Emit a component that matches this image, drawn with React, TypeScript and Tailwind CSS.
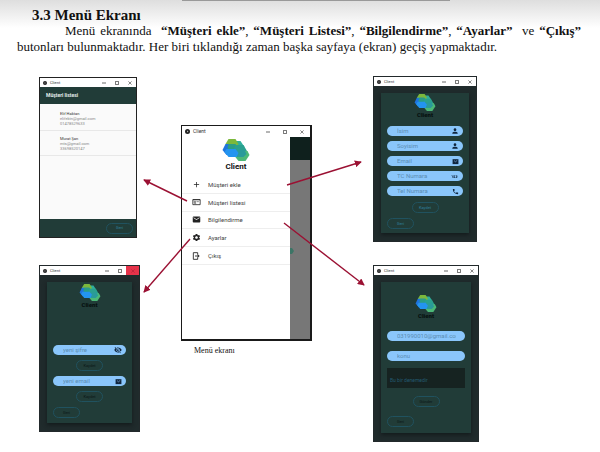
import type { ReactNode } from "react";
import { MdAdd, MdEmail, MdPerson, MdPhone, MdSettings, MdVisibilityOff, Md123 } from "react-icons/md";

function CloudMark({ className }: { className: string }) {
  return (
    <svg viewBox="0 0 27 22" className={className} aria-hidden="true">
      <path d="M10 2h8l4 6-3 5h-9z" fill="#2fae9c" />
      <path d="M6 0h7l3 5-3 5H6L3 5z" fill="#7cb83c" />
      <path d="M3 5h9l4 6-3 5H4l-4-5z" fill="#1f74dd" />
      <path d="M6 5h7l3 5-2 3H8l-3-4z" fill="#2a9d86" />
      <path d="M13 6h8l4 7-4 5h-9l-2-5z" fill="#2aa08f" />
      <path d="M15 12h10l2 4-4 6h-7l-4-5z" fill="#4cb877" />
      <path d="M14 11h8l2 4-3 3h-7z" fill="#2a9a9a" />
      <path d="M4 10h9l3 4-2 4H6l-4-5z" fill="#2394f0" />
    </svg>
  );
}

function EmailBox() {
  return (
    <svg viewBox="0 0 24 24" className="size-[7px]" aria-hidden="true">
      <path d="M2 4h20v17H2z" fill="#10263f" />
      <path d="M7 9l5 4 6-5" fill="none" stroke="#90c8fa" strokeWidth="2" />
    </svg>
  );
}

function CardIcon() {
  return (
    <svg viewBox="0 0 24 24" className="h-2 w-[9px]" fill="none" stroke="#222" strokeWidth="2.4" aria-hidden="true">
      <path d="M1 5h22v15H1zM1 5h22" />
      <path d="M5 10h4v4H5zM12 11h7M5 17h6" strokeWidth="1.6" />
    </svg>
  );
}

function ExitIcon() {
  return (
    <svg viewBox="0 0 24 24" className="size-2" fill="none" stroke="#222" strokeWidth="2.6" aria-hidden="true">
      <path d="M17 8V2H4v20h13v-6M9 12h10" />
      <path d="M17 7l6 5-6 5z" fill="#222" stroke="none" />
    </svg>
  );
}

function TitleBar({ large, alert }: { large?: boolean; alert?: boolean }) {
  return (
    <div className={`flex shrink-0 items-stretch bg-white text-[#333] ${large ? "h-[11px] text-[5px]" : "h-[9px] text-[4px]"}`}>
      <div className="flex flex-1 items-center gap-[3px] pl-[3px]">
        <svg viewBox="0 0 10 10" className={large ? "size-[5px]" : "size-1"} aria-hidden="true">
          <circle cx="5" cy="5" r="5" fill="#222" />
          <path d="M4 3l3 2-3 2z" fill="#bbb" />
        </svg>
        <span>Client</span>
      </div>
      <button type="button" aria-label="Küçült" className={`flex items-center justify-center ${large ? "w-[17px]" : "w-[13px]"}`}>
        <svg viewBox="0 0 5 5" className="size-1"><path d="M0 2.5h5" stroke="#444" /></svg>
      </button>
      <button type="button" aria-label="Büyüt" className={`flex items-center justify-center ${large ? "w-[17px]" : "w-[13px]"}`}>
        <svg viewBox="0 0 5 5" className="size-1"><path d="M.5.5h4v4h-4z" fill="none" stroke="#444" /></svg>
      </button>
      <button
        type="button"
        aria-label="Kapat"
        className={`flex items-center justify-center ${large ? "w-[17px]" : "w-[13px]"} ${alert ? "bg-[#e6334a]" : ""}`}
      >
        <svg viewBox="0 0 5 5" className="size-1"><path d="M.5.5l4 4M4.5.5l-4 4" stroke={alert ? "#b02035" : "#444"} strokeWidth=".8" /></svg>
      </button>
    </div>
  );
}

function Pill({ children, dark, className = "" }: { children: ReactNode; dark?: boolean; className?: string }) {
  return (
    <button
      type="button"
      className={`flex h-[11px] w-[27px] shrink-0 items-center justify-center rounded-full border border-[#20525f] text-[4px] ${dark ? "text-[#0a1716]" : "text-[#2f7f9e]"} ${className}`}
    >
      {children}
    </button>
  );
}

function Field({ label, icon, value }: { label: string; icon?: ReactNode; value?: string }) {
  return (
    <label className={`flex h-[10px] shrink-0 items-center rounded-full bg-[#8ac6fb] pl-[10px] text-[#10263f] ${icon ? "pr-1" : "pr-[9px]"}`}>
      <input
        type="text"
        aria-label={label}
        placeholder={label}
        defaultValue={value}
        className="h-[10px] w-0 min-w-0 flex-1 bg-transparent text-[6px] leading-[10px] text-[#5b8db3] outline-none placeholder:text-[#5b8db3]"
      />
      {icon}
    </label>
  );
}

function Brand() {
  return (
    <div className="flex flex-col items-center">
      <CloudMark className="h-[17px] w-[22px]" />
      <span className="text-[6px] leading-[7px] font-black text-[#061110]">Client</span>
    </div>
  );
}

function CustomerList() {
  const customers = [
    { name: "Elif Haktan", mail: "elifektn@gmail.com", no: "01478529633" },
    { name: "Murat Şan", mail: "mts@gmail.com", no: "33698520147" },
  ];
  return (
    <section className="mr-[3px] flex h-[161px] flex-col border border-[#222] bg-[#fafafa]">
      <TitleBar />
      <h2 className="flex h-[17px] shrink-0 items-center bg-[#213c38] pl-[6px] text-[5px] font-bold text-[#e4eceb]">Müşteri listesi</h2>
      <ul className="flex-1 pt-[2px]">
        {customers.map((c) => (
          <li key={c.name} className="flex h-[25px] flex-col justify-center border-b border-[#e8e8e8] pl-5 text-[4px] leading-[5px] text-[#888]">
            <span className="text-[#333]">{c.name}</span>
            <span>{c.mail}</span>
            <span>{c.no}</span>
          </li>
        ))}
      </ul>
      <footer className="flex h-[18px] shrink-0 items-center justify-end bg-[#213c38] pr-[3px]">
        <Pill>Geri</Pill>
      </footer>
    </section>
  );
}

function Shell({ alert, className, children }: { alert?: boolean; className: string; children: ReactNode }) {
  return (
    <section className={`flex flex-col border border-[#22292b] bg-[#202b2c] ${className}`}>
      <TitleBar alert={alert} />
      <div className="mx-[7px] mt-[7px] mb-2 flex flex-1 flex-col bg-[#213c38] px-[6px] shadow-[0_2px_4px_#131b1c]">{children}</div>
    </section>
  );
}

function CustomerForm() {
  return (
    <Shell className="mr-[2px] h-[166px]">
      <div className="pt-px"><Brand /></div>
      <div className="mt-2 flex flex-col gap-[5px]">
        <Field label="İsim" icon={<MdPerson size={8} />} />
        <Field label="Soyisim" icon={<MdPerson size={8} />} />
        <Field label="Email" icon={<EmailBox />} />
        <Field label="TC Numara" icon={<Md123 size={9} />} />
        <Field label="Tel Numara" icon={<MdPhone size={7} />} />
      </div>
      <Pill className="mt-[6px] self-center">Kaydet</Pill>
      <Pill className="mt-[5px]">Geri</Pill>
    </Shell>
  );
}

function Settings() {
  return (
    <Shell alert className="h-[167px]">
      <div className="pt-[2px]"><Brand /></div>
      <div className="mt-[37px] flex flex-col gap-[5px]">
        <Field label="yeni şifre" icon={<MdVisibilityOff size={8} />} />
        <Pill dark className="self-center">Kaydet</Pill>
        <Field label="yeni email" icon={<EmailBox />} />
        <Pill dark className="self-center">Kaydet</Pill>
        <Pill dark>Geri</Pill>
      </div>
    </Shell>
  );
}

function Notify() {
  return (
    <Shell className="h-[177px]">
      <div className="pt-[13px]"><Brand /></div>
      <div className="mt-3 flex flex-col gap-[10px]">
        <Field label="Email" value="031990010@gmail.com" />
        <Field label="konu" />
      </div>
      <textarea
        aria-label="Mesaj"
        defaultValue="Bu bir denemedir"
        className="mt-[7px] h-5 shrink-0 resize-none overflow-hidden bg-[#162321] px-[3px] pt-[9px] text-[5px] leading-[6px] text-[#245a70] outline-none"
      />
      <Pill dark className="mt-2 self-center">Gönder</Pill>
      <Pill dark className="mt-[9px]">Geri</Pill>
    </Shell>
  );
}

function MenuScreen() {
  const items = [
    { text: "Müşteri ekle", icon: <MdAdd size={9} /> },
    { text: "Müşteri listesi", icon: <CardIcon /> },
    { text: "Bilgilendirme", icon: <MdEmail size={9} /> },
    { text: "Ayarlar", icon: <MdSettings size={9} /> },
    { text: "Çıkış", icon: <ExitIcon /> },
  ];
  return (
    <section className="flex h-[216px] flex-col border border-r-2 border-b-2 border-[#1a1a1a] bg-white">
      <TitleBar large />
      <div className="flex flex-1">
        <nav className="flex-1">
          <div className="flex flex-col items-center pt-[2px]">
            <CloudMark className="h-[22px] w-7" />
            <span className="text-[8px] leading-[12px] font-bold text-[#111]">Client</span>
          </div>
          <ul className="mt-[3px] flex h-[89px] flex-col">
            {items.map((item) => (
              <li key={item.text} className="flex flex-1 border-b border-[#eee]">
                <button type="button" className="flex flex-1 items-center gap-[7px] pl-[9px] text-left text-[6px] text-[#444]">
                  <span className="flex w-[10px] justify-center text-[#222]">{item.icon}</span>
                  {item.text}
                </button>
              </li>
            ))}
          </ul>
        </nav>
        <div className="flex w-5 flex-col bg-[#777]">
          <div className="h-[23px] bg-[#0f201d]" />
          <svg viewBox="0 0 4 6" className="mt-[88px] h-[6px] w-1" aria-hidden="true"><path d="M0 0h2l2 3-2 3H0z" fill="#3c7566" /></svg>
        </div>
      </div>
    </section>
  );
}

function Arrows() {
  return (
    <svg viewBox="0 0 440 370" preserveAspectRatio="none" className="pointer-events-none absolute inset-0 h-full w-full" aria-hidden="true">
      <defs>
        <marker id="tip" viewBox="0 0 8 8" refX="7" refY="4" markerWidth="7" markerHeight="7" markerUnits="userSpaceOnUse" orient="auto">
          <path d="M0 0l8 4-8 4z" fill="#9b1133" />
        </marker>
      </defs>
      <g stroke="#9b1133" strokeWidth="1.4">
        <path d="M148 129l-43-21" markerEnd="url(#tip)" />
        <path d="M248 113l74-23" markerEnd="url(#tip)" />
        <path d="M151 167l-46 53" markerEnd="url(#tip)" />
        <path d="M245 151l80 62" markerEnd="url(#tip)" />
      </g>
    </svg>
  );
}

export default function App() {
  return (
    <main className="min-h-screen bg-white bg-linear-to-b from-[#dedede] to-white to-[28px] font-['Liberation_Serif',serif] text-[#111]">
      <div className="mr-[150px] ml-[182px] h-px bg-[#999]" />
      <article>
        <h1 className="pt-[6px] pl-8 text-[15px] leading-4 font-bold">3.3 Menü Ekranı</h1>
        <p className="mr-[19px] ml-[17px] indent-12 text-justify text-[13px] leading-4">
          Menü ekranında&nbsp; <b>“Müşteri ekle”</b>, <b>“Müşteri Listesi”</b>, <b>“Bilgilendirme”</b>, <b>“Ayarlar”</b>&nbsp; ve <b>“Çıkış”</b>{" "}
          butonları bulunmaktadır. Her biri tıklandığı zaman başka sayfaya (ekran) geçiş yapmaktadır.
        </p>
      </article>
      <figure className="relative mt-[17px] mr-[121px] ml-[39px] grid h-[370px] grid-cols-[142fr_192fr_106fr] items-start font-[Roboto,sans-serif]">
        <div className="mr-[41px] flex flex-col gap-[27px] pt-[5px]">
          <CustomerList />
          <Settings />
        </div>
        <div className="mr-[61px] pt-[53px]">
          <MenuScreen />
          <figcaption className="mt-[5px] pl-[13px] font-['Liberation_Serif',serif] text-[8px] leading-[10px]">Menü ekranı</figcaption>
        </div>
        <div className="flex flex-col gap-[23px] pt-1">
          <CustomerForm />
          <Notify />
        </div>
        <Arrows />
      </figure>
    </main>
  );
}
